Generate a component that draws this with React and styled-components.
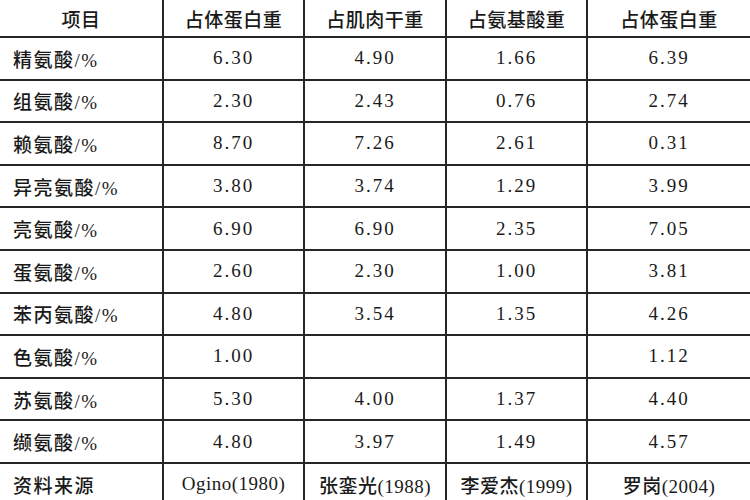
import React from "react";
import styled, { createGlobalStyle } from "styled-components";

const GlobalStyle = createGlobalStyle`
  html, body {
    margin: 0;
    padding: 0;
    background: #fff;
  }
  body {
    width: 750px;
    height: 500px;
    overflow: hidden;
  }
`;

const Table = styled.table`
  width: 750px;
  table-layout: fixed;
  border-collapse: collapse;
  font-family: "Liberation Serif", "Noto Sans CJK SC", serif;
  font-size: 19px;
  font-weight: 500;
  color: #1a1a1a;

  col:nth-child(1),
  col:nth-child(5) {
    width: 163px;
  }
  col:nth-child(2),
  col:nth-child(4) {
    width: 141px;
  }
  col:nth-child(3) {
    width: 142px;
  }
`;

const HeadRow = styled.tr`
  height: 37px;
`;

const Row = styled.tr`
  height: 42.6px;
`;

const Cell = styled.td`
  padding: 0;
  border: 2px solid #262626;
  border-top: ${(p) => (p.$first ? "none" : "2px solid #262626")};
  border-left: ${(p) => (p.$col === 0 ? "none" : "2px solid #262626")};
  border-right: ${(p) => (p.$col === 4 ? "none" : "2px solid #262626")};
  text-align: ${(p) => (p.$left ? "left" : "center")};
  padding-left: ${(p) => (p.$left ? "13px" : "0")};
  letter-spacing: ${(p) => (p.$num ? "2px" : p.$left ? "1.5px" : "0.5px")};
  vertical-align: middle;
  white-space: nowrap;
`;

const headers = ["项目", "占体蛋白重", "占肌肉干重", "占氨基酸重", "占体蛋白重"];

const rows = [
  ["精氨酸/%", "6.30", "4.90", "1.66", "6.39"],
  ["组氨酸/%", "2.30", "2.43", "0.76", "2.74"],
  ["赖氨酸/%", "8.70", "7.26", "2.61", "0.31"],
  ["异亮氨酸/%", "3.80", "3.74", "1.29", "3.99"],
  ["亮氨酸/%", "6.90", "6.90", "2.35", "7.05"],
  ["蛋氨酸/%", "2.60", "2.30", "1.00", "3.81"],
  ["苯丙氨酸/%", "4.80", "3.54", "1.35", "4.26"],
  ["色氨酸/%", "1.00", "", "", "1.12"],
  ["苏氨酸/%", "5.30", "4.00", "1.37", "4.40"],
  ["缬氨酸/%", "4.80", "3.97", "1.49", "4.57"],
];

const sources = ["资料来源", "Ogino(1980)", "张銮光(1988)", "李爱杰(1999)", "罗岗(2004)"];

export default function App() {
  return (
    <>
      <GlobalStyle />
      <Table>
        <colgroup>
          <col />
          <col />
          <col />
          <col />
          <col />
        </colgroup>
        <tbody>
          <HeadRow>
            {headers.map((h, i) => (
              <Cell key={i} $col={i} $first>
                {h}
              </Cell>
            ))}
          </HeadRow>
          {rows.map((r, idx) => (
            <Row key={idx}>
              {r.map((v, i) => (
                <Cell key={i} $col={i} $left={i === 0} $num={i > 0}>
                  {v}
                </Cell>
              ))}
            </Row>
          ))}
          <Row>
            {sources.map((s, i) => (
              <Cell key={i} $col={i} $left={i === 0}>
                {s}
              </Cell>
            ))}
          </Row>
        </tbody>
      </Table>
    </>
  );
}
